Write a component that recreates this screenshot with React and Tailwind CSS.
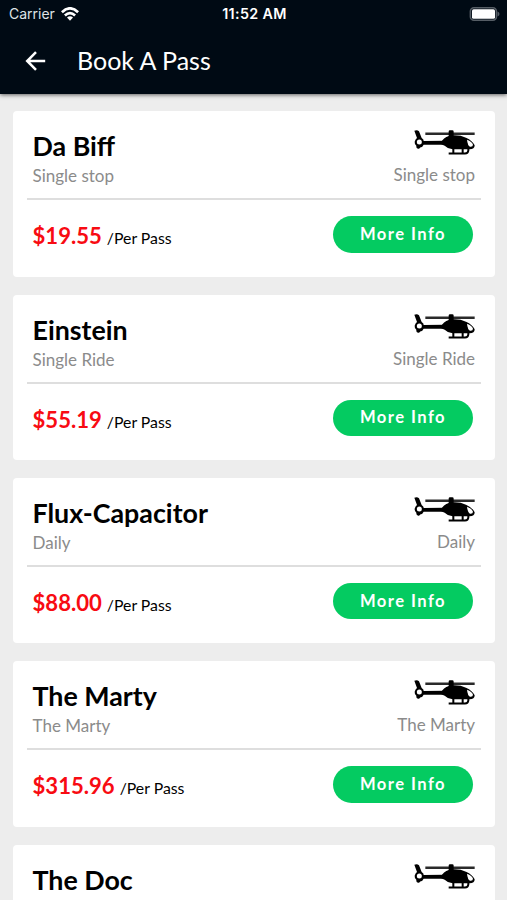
const passes = [
  { name: "Da Biff", type: "Single stop", price: "$19.55" },
  { name: "Einstein", type: "Single Ride", price: "$55.19" },
  { name: "Flux-Capacitor", type: "Daily", price: "$88.00" },
  { name: "The Marty", type: "The Marty", price: "$315.96" },
  { name: "The Doc" },
];

function Helicopter() {
  return (
    <svg className="h-[27px] w-[61px]" viewBox="0 0 183 81" fill="none">
      {/* rotor */}
      <path d="M34 14.5H182" stroke="#2a2a2a" strokeWidth="7.5" />
      <path d="M104 8q0-4 4-4h7q4 0 4 4v16h-15z" fill="#000" />
      {/* tail */}
      <path d="M1 5q9-3 14 2l8 20q7 5 6 9l62-1v12l-62 0q-4 8-9 8l-5 4q-9 1-8-9-6-6-5-12 2-8 7-11z" fill="#000" />
      <circle cx="16" cy="39" r="7.5" fill="#fff" />
      {/* body */}
      <path d="M84 35q12-13 28-16 26-2 44 7 20 9 26 23 0 12-15 12H116q-14-1-24-11l-10-4z" fill="#000" />
      <path d="M159 32q15 6 18 15 0 7-9 6-7-3-9-21z" fill="#fff" />
      {/* skids */}
      <path d="M104 73.5H153q9 0 10-9V58M118 57v16M146 57v16" stroke="#000" strokeWidth="6" />
    </svg>
  );
}

function PassCard({ pass }) {
  return (
    <div className="h-[165.3px] shrink-0 rounded-[4px] bg-white pl-[13.5px] pr-[13.5px] pt-[18px]">
      <div className="flex h-[71px] justify-between border-b-2 border-[#dedede] pl-[6px] pr-[6px]">
        <div>
          <h2 className="text-[26.8px] font-bold leading-[35px] text-black">{pass.name}</h2>
          {pass.type && <p className="text-[17px] leading-[24px] text-[#8b8b8b]">{pass.type}</p>}
        </div>
        <div className="flex flex-col items-end">
          <Helicopter />
          {pass.type && <p className="mt-[7px] text-[17px] leading-[24px] text-[#8b8b8b]">{pass.type}</p>}
        </div>
      </div>
      {pass.price && (
        <div className="flex items-start justify-between pl-[6px] pr-[8px] pt-[16px]">
          <div className="flex items-baseline gap-[5px] pt-[4px]">
            <span className="text-[22.1px] font-bold leading-[32px] text-[#f80b12]">{pass.price}</span>
            <span className="text-[15.8px] text-black">/Per Pass</span>
          </div>
          <button className="h-[36.5px] w-[140px] rounded-full bg-[#04cb61] text-[16.6px] font-bold tracking-[1.45px] text-white">
            More Info
          </button>
        </div>
      )}
    </div>
  );
}

export default function App() {
  return (
    <div className="flex h-[900px] w-[507px] flex-col overflow-hidden bg-[#ededed] font-['Lato',sans-serif]">
      <header className="z-10 h-[94px] shrink-0 bg-[#000a14] text-white shadow-[0_1px_4px_rgba(0,0,0,0.6)]">
        {/* status bar */}
        <div className="grid h-[27px] grid-cols-3 items-center pl-[9px] pr-[7px] font-['Inter',sans-serif]">
          <div className="flex items-center gap-[6px] text-[14px] text-[#dfe3e6]">
            <span>Carrier</span>
            <svg className="h-[14px] w-[18px]" viewBox="0 0 18 14" fill="none" stroke="#fff" strokeWidth="2.7">
              <path d="M0.9 5.2Q9-2.5 17.1 5.2M3.9 8.5q5.1-4.6 10.2 0" />
              <path d="M6 10.6q3-2.5 6 0L9 13.8z" fill="#fff" stroke="none" />
            </svg>
          </div>
          <span className="text-center text-[14.3px] font-semibold tracking-[0.35px]">11:52 AM</span>
          <svg className="h-[14px] w-[31px] justify-self-end" viewBox="0 0 31 14">
            <rect x="1.4" y="0.8" width="26" height="12.4" rx="3.5" fill="none" stroke="#555d65" strokeWidth="1.6" />
            <rect x="3" y="2.2" width="23" height="9.6" rx="1.6" fill="#fff" />
            <path d="M28.5 4.5q2 .8 2 2.5t-2 2.5z" fill="#555d65" />
          </svg>
        </div>
        <div className="flex h-[67px] items-center pl-[25px]">
          <svg className="h-[20px] w-[21px]" viewBox="0 0 21 20" fill="none" stroke="#fff" strokeWidth="2.5">
            <path d="M20.2 10H2.5M11 1.2L2.2 10l8.8 8.8" />
          </svg>
          <h1 className="mb-[2px] ml-[31px] text-[25px] leading-[32px]">Book A Pass</h1>
        </div>
      </header>

      <main className="flex flex-col gap-[18px] pl-[13px] pr-[12.5px] pt-[17.4px]">
        {passes.map((pass) => (
          <PassCard key={pass.name} pass={pass} />
        ))}
      </main>
    </div>
  );
}
